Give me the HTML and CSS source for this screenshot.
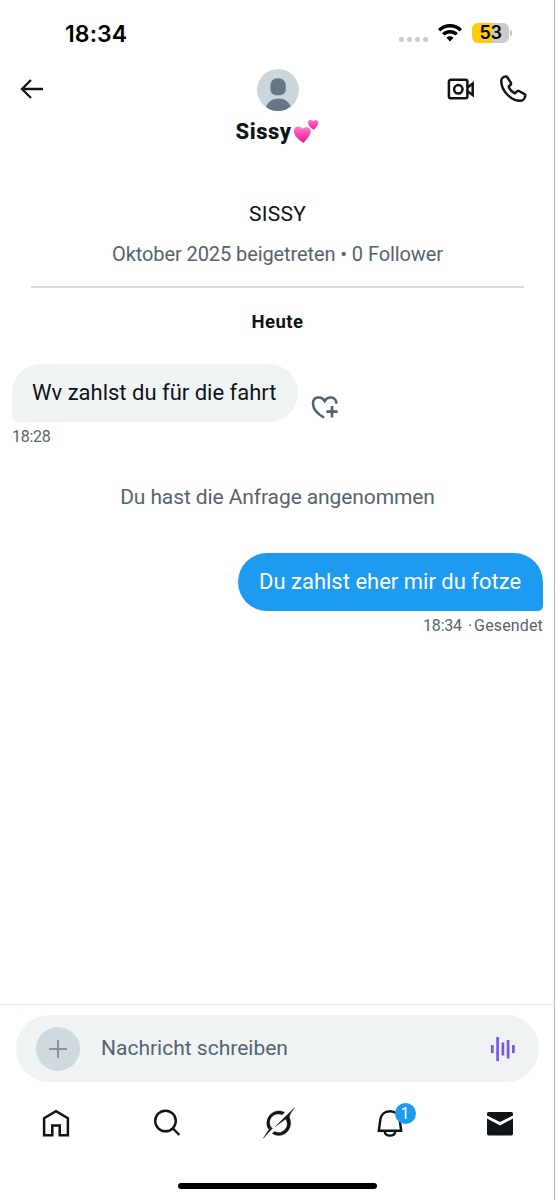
FILE: index.html
```html
<!DOCTYPE html>
<html lang="de">
<head>
<meta charset="utf-8">
<title>Sissy</title>
<link rel="stylesheet" href="styles.css">
</head>
<body>
<div class="phone">
  <div class="status">
    <span class="clock">18:34</span>
    <div class="indicators">
      <div class="signal"><i></i><i></i><i></i><i></i></div>
      <svg class="wifi" width="24" height="18" viewBox="0 0 24 18" fill="none" stroke="#000" stroke-width="3.4">
        <path d="M1.1 6.2C7.2.2 16.8.2 22.900 6.200"/>
        <path d="M5.300 10.400C9 6.800 15 6.800 18.700 10.400"/>
        <path d="M8.400 13.700C10.400 11.600 13.600 11.600 15.600 13.700L12 17.500Z" fill="#000" stroke="none"/>
      </svg>
      <div class="battery">53</div>
      <div class="nub"></div>
    </div>
  </div>

  <header class="header">
    <svg class="back" width="24" height="22" viewBox="0 0 24 22" fill="none" stroke="#0f1419" stroke-width="2.300"><path d="M11 2 2 11 11 20M2 11H23"/></svg>
    <div class="contact">
      <svg width="42" height="42" viewBox="0 0 42 42">
        <clipPath id="disc"><circle cx="21" cy="21" r="21"/></clipPath>
        <g clip-path="url(#disc)">
          <rect width="42" height="42" fill="#cbd6dc"/>
          <path d="M13.300 18C13.300 12.500 16 9.300 21 9.300S28.900 12.500 28.900 18C28.900 23.500 27.500 26.300 21 26.300S13.300 23.500 13.300 18Z" fill="#657786"/>
          <path d="M7 42C10.500 33 14.500 29.500 21.500 29.500S32.500 33 36 42Z" fill="#657786"/>
        </g>
      </svg>
      <div class="name"><span>Sissy</span>
        <svg width="26" height="26" viewBox="0 0 26 26">
          <defs><linearGradient id="pink" x1="0" y1="0" x2="0" y2="1"><stop offset="0" stop-color="#ff7fca"/><stop offset=".5" stop-color="#f748ad"/><stop offset="1" stop-color="#e91b96"/></linearGradient></defs>
          <path fill="url(#pink)" d="M10.400 25C5 21.500.8 17.500.8 12.600C.8 8.300 6.900 6.800 9.300 11C12.600 7.300 18.600 9.600 17.700 14.300C16.900 18.500 13.300 22 10.400 25Z"/>
          <path fill="url(#pink)" d="M20.800 11.800C16.900 9.400 14.800 6.900 15.100 4C15.500 1.300 18.800.8 20.100 3.200C22.100 1 25.800 2.300 25.400 5.300C25 7.900 22.800 9.900 20.800 11.800Z"/>
        </svg>
      </div>
    </div>
    <div class="calls">
      <svg width="28" height="22" viewBox="0 0 28 22" fill="none" stroke="#0f1419" stroke-width="2.500"><rect x="1.900" y="1.700" width="18.500" height="18.600" rx="2"/><circle cx="11.300" cy="11.300" r="4.200"/><path d="M20.500 9.400 25.700 5.500V17L20.500 13.200"/></svg>
      <svg width="28" height="28" viewBox="0 0 28 28" fill="none" stroke="#0f1419" stroke-width="2.500" stroke-linejoin="round"><path d="M2.300 6.200C2.100 3.600 4.500 1.700 6.600 1.500C7.300 1.400 7.900 1.700 8.300 2.300L11.800 7.600C12.200 8.300 12.100 9 11.600 9.600L9.700 11.700C10.500 14.400 13 16.800 15.900 18.300L18 16.300C18.600 15.700 19.300 15.600 20 16L25.500 19.200C26.200 19.600 26.400 20.200 26.300 20.900C25.900 23.300 24 25.800 21.400 25.800C11.500 25.800 2.500 15.500 2.300 6.200Z"/></svg>
    </div>
  </header>

  <main class="thread">
    <div class="handle">SISSY</div>
    <div class="joined">Oktober 2025 beigetreten • 0 Follower</div>
    <div class="rule"></div>
    <div class="day">Heute</div>
    <div class="incoming">
      <div class="bubble received"><span>Wv zahlst du für die fahrt</span></div>
      <svg width="28" height="26" viewBox="0 0 28 26" fill="none" stroke="#536471" stroke-width="2.500"><path d="M13.100 22.700C6.500 19 2 14 2 8.500C2 1.700 10.300.3 13.700 6C17.100.3 25.300 1.700 25.400 8.700"/><path d="M21 11V22.500M15.300 16.700H26.700" stroke-width="2.700"/></svg>
    </div>
    <div class="time"><span>18:28</span></div>
    <div class="notice">Du hast die Anfrage angenommen</div>
    <div class="bubble sent"><span>Du zahlst eher mir du fotze</span></div>
    <div class="receipt"><span class="sent-time">18:34</span><span class="sent-dot">·</span><span class="sent-label">Gesendet</span></div>
  </main>

  <div class="composer">
    <div class="field">
      <div class="add"><svg width="18" height="18" viewBox="0 0 18 18" stroke="#87919a" stroke-width="2"><path d="M9 0V18M0 9H18"/></svg></div>
      <span class="placeholder">Nachricht schreiben</span>
      <svg class="voice" width="26" height="24" viewBox="0 0 26 24" stroke="#7856e5" stroke-width="2.700"><path d="M2.300 8V16M7.600 0V24M12.900 5.500V18.500M18.100 3V21.500M23.400 8V16"/></svg>
    </div>
  </div>

  <nav class="tabs">
    <svg width="30" height="32" viewBox="0 0 30 32" fill="none" stroke="#0f1419" stroke-width="2.500"><path d="M3.100 28.300V11.300L15 4.100 26.900 11.300V28.300H18.700V18.500H11.300V28.300Z"/></svg>
    <svg width="30" height="32" viewBox="0 0 30 32" fill="none" stroke="#0f1419" stroke-width="2.400"><circle cx="13.500" cy="14" r="10.300"/><path d="M21 21.500 27.400 28"/></svg>
    <svg class="orbit" width="34" height="32" viewBox="0 0 34 32" fill="#0f1419" stroke="#0f1419" stroke-width=".4"><path d="M22.500 5.300C17 2.600 10.800 4 7.300 8.700C3.800 13.500 4.300 18.600 6.800 22.500L9 20.300C7 16.800 7.100 13 9.600 10C12.300 6.800 16.500 6.200 20.200 7.700Z"/><path d="M32.500.8 13.300 19.600 23.700 12C26.300 16 25.500 20 22.600 22.900C19.700 25.700 15.700 26.100 12.700 24.500L10.300 26.500C15.200 29.700 21 28.900 25 25C28.600 21.300 29.600 15.900 27.600 11.100C26.800 9.200 28.200 6.700 32.500.8Z"/><path d="M1.300 31.200C4.200 27.300 4.600 24.700 9.500 20.300L10.500 21.300Z"/></svg>
    <div class="alerts"><svg width="30" height="32" viewBox="0 0 30 32" fill="none" stroke="#0f1419" stroke-width="2.400"><path d="M5.300 13C5.800 7.800 9.500 4.200 15 4.200S24.200 7.800 24.700 13L26.200 23.800H3.800Z"/><path d="M9.700 24.500C10.200 30 19.800 30 20.300 24.500"/></svg><span class="badge">1</span></div>
    <svg width="30" height="32" viewBox="0 0 30 32" fill="#0f1419"><path d="M2 8.500V6.500Q2 5 3.500 5H26.500Q28 5 28 6.500V8.500L15 15Z"/><path d="M2 11.500 15 18.400 28 11.500V26.500Q28 28.500 26.500 28.500H3.500Q2 28.500 2 26.500Z"/></svg>
  </nav>
  <div class="home-bar"></div>
</div>
</body>
</html>
```
FILE: styles.css
```css
* { box-sizing: border-box; }
body { margin: 0; background: #fff; }
svg { display: block; flex: none; }
.phone {
  width: 555px; height: 1200px; overflow: hidden;
  display: flex; flex-direction: column;
  background: linear-gradient(#b5b8bb, #b5b8bb) right / 1px 100% no-repeat;
  font-family: Roboto, "Liberation Sans", sans-serif;
  color: #0f1419; white-space: nowrap;
}
.status { height: 66px; padding: 0 43px 0 65px; display: flex; justify-content: space-between; align-items: center; font-family: Inter, "Liberation Sans", sans-serif; color: #000; }
.clock { font-size: 23px; font-weight: 600; letter-spacing: .1px; padding-top: 1px; }
.indicators { display: flex; align-items: center; }
.signal { display: flex; gap: 3px; margin: 12px 10px 0 0; }
.signal i { width: 5px; height: 5px; border-radius: 50%; background: #c9c9c9; }
.battery { width: 37px; height: 20px; margin-left: 10px; border-radius: 6px; background: linear-gradient(90deg, #fecb0c 53%, #cbcbcb 53%); font-size: 18px; line-height: 20px; font-weight: 600; letter-spacing: -.5px; text-align: center; }
.nub { width: 2px; height: 6px; margin-left: 1px; border-radius: 0 3px 3px 0; background: #c5c5c5; }

.header { height: 84px; padding: 3px 28px 0 20px; display: grid; grid-template-columns: 100px 1fr 92px; }
.back { margin-top: 9px; }
.contact { display: flex; flex-direction: column; align-items: center; }
.name { height: 40px; display: flex; align-items: center; gap: 2px; font-size: 22px; font-weight: 800; letter-spacing: .5px; }
.calls { display: flex; justify-content: flex-end; gap: 24px; }
.calls svg:first-child { margin-top: 9px; }
.calls svg:last-child { margin-top: 6px; }

.thread { flex: 1; display: flex; flex-direction: column; }
.handle { margin-top: 50px; height: 30px; line-height: 29px; text-align: center; font-size: 21px; letter-spacing: .3px; }
.joined { margin-top: 9px; height: 30px; line-height: 30px; text-align: center; font-size: 20px; letter-spacing: -.09px; color: #536471; }
.rule { height: 2px; margin: 17px 31px 0; background: #d3dde3; }
.day { margin-top: 22px; height: 24px; line-height: 24px; text-align: center; font-size: 18.500px; font-weight: 700; letter-spacing: .5px; }
.incoming { display: flex; align-items: flex-end; gap: 13px; margin: 30px 0 0 12px; }
.incoming svg { margin-bottom: 1px; }
.bubble { height: 58px; line-height: 57px; padding: 0 21px; font-size: 22px; }
.received { width: 286px; padding-left: 20px; border-radius: 29px 29px 29px 5px; background: #eff3f4; }
.time { margin: 4px 0 0 12px; height: 22px; line-height: 22px; font-size: 16px; letter-spacing: -.25px; color: #536471; }
.notice { margin-top: 34px; height: 30px; line-height: 30px; text-align: center; font-size: 21px; letter-spacing: -.1px; color: #536471; }
.sent { align-self: flex-end; width: 305px; margin: 41px 12px 0 0; border-radius: 29px 29px 5px 29px; background: #1d9bf0; color: #fff; }
.receipt { align-self: flex-end; display: flex; margin: 4px 12px 0 0; height: 22px; line-height: 22px; font-size: 16px; color: #536471; }
.sent-time { letter-spacing: -.2px; }
.sent-dot { margin: 0 2px 0 6px; }
.sent-label { letter-spacing: .15px; }

.composer { height: 78px; padding: 10px 16px 0; border-top: 1px solid #e6e8e9; }
.field { height: 67px; border-radius: 34px; background: #eff3f4; display: flex; align-items: center; padding: 0 23px 0 20px; }
.add { width: 44px; height: 44px; border-radius: 50%; background: #cfd9de; display: flex; align-items: center; justify-content: center; }
.placeholder { margin-left: 21px; font-size: 21px; line-height: 24px; padding-bottom: 1px; color: #536471; }
.voice { margin-left: auto; }
.tabs { height: 81px; display: grid; grid-template-columns: repeat(5, 111px); justify-items: center; padding-top: 25px; }
.orbit { margin-left: 2px; }
.alerts { position: relative; margin-left: 2px; }
.badge { position: absolute; left: 20px; top: -4px; width: 21px; height: 21px; border-radius: 50%; background: #1d9bf0; color: #fff; font-size: 16px; line-height: 21px; text-align: center; }
.home-bar { width: 199px; height: 6px; margin: 20px 0 11px 178px; border-radius: 3px; background: #000; flex: none; }
```
